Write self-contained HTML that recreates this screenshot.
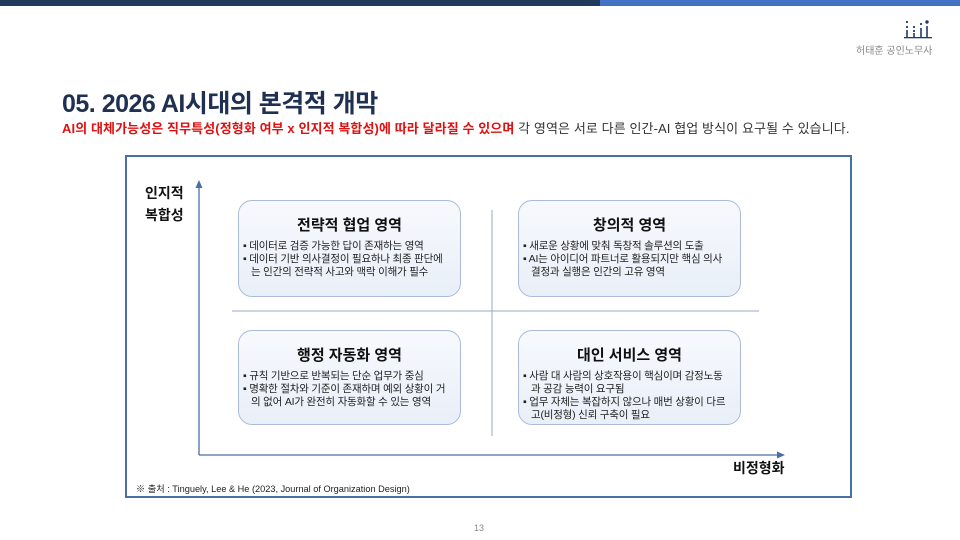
<!DOCTYPE html>
<html><head><meta charset="utf-8"><style>
*{margin:0;padding:0;box-sizing:border-box}
body{width:960px;height:540px;background:#fff;position:relative;overflow:hidden;font-family:"Liberation Sans","Noto Sans CJK KR",sans-serif;color:#222}
.a{position:absolute}
.box{position:absolute;width:223px;border:1px solid #a9bbd8;border-radius:14px;background:linear-gradient(#f7f9fd,#e9eff8);padding:0 4px}
.box h3{font-size:15px;font-weight:bold;text-align:center;margin-top:13px;margin-bottom:5px;color:#111}
.box p{font-size:10.5px;line-height:13px;padding-left:8px;text-indent:-8px;color:#222;letter-spacing:-0.2px;white-space:nowrap}
</style></head><body>
<div class="a" style="left:0;top:0;width:600px;height:6px;background:#213a5c"></div>
<div class="a" style="left:600px;top:0;width:360px;height:6px;background:#4472c4"></div>
<svg class="a" style="left:904px;top:18px" width="30" height="22" viewBox="0 0 30 22">
<g fill="#1f3a6a"><circle cx="3" cy="4" r="1.1"/><circle cx="3" cy="9" r="1.1"/><rect x="2.2" y="12" width="1.6" height="7"/>
<circle cx="10" cy="9" r="1.1"/><circle cx="10" cy="13" r="1.1"/><rect x="9.2" y="15" width="1.6" height="4"/>
<circle cx="17" cy="6" r="1.1"/><rect x="16.2" y="10" width="1.6" height="9"/>
<circle cx="23" cy="4" r="1.7"/><rect x="22.2" y="8" width="1.6" height="11"/>
<rect x="0" y="19" width="28" height="1.3"/></g></svg>
<div class="a" style="left:856px;top:42px;font-size:10px;color:#888">허태훈 공인노무사</div>
<div class="a" style="left:62px;top:84px;font-size:25px;font-weight:bold;color:#1f3050;letter-spacing:-0.5px">05. 2026 AI시대의 본격적 개막</div>
<div class="a" style="left:62px;top:118px;font-size:13px;color:#333;white-space:nowrap;letter-spacing:0.1px"><b style="color:#e01010">AI의 대체가능성은 직무특성(정형화 여부 x 인지적 복합성)에 따라 달라질 수 있으며</b> 각 영역은 서로 다른 인간-AI 협업 방식이 요구될 수 있습니다.</div>
<div class="a" style="left:125px;top:155px;width:727px;height:343px;border:2px solid #4a6fa5"></div>
<svg class="a" style="left:0;top:0" width="960" height="540">
<line x1="199" y1="455" x2="199" y2="186" stroke="#4a6fa5" stroke-width="1.3"/>
<polygon points="199,180 195.5,188 202.5,188" fill="#4a6fa5"/>
<line x1="199" y1="455" x2="779" y2="455" stroke="#4a6fa5" stroke-width="1.3"/>
<polygon points="785,455 777,451.5 777,458.5" fill="#4a6fa5"/>
<line x1="492" y1="210" x2="492" y2="436" stroke="#9aaac4" stroke-width="1"/>
<line x1="232" y1="311" x2="759" y2="311" stroke="#9aaac4" stroke-width="1"/>
</svg>
<div class="a" style="left:145px;top:182px;font-size:14px;font-weight:bold;line-height:22px;color:#111">인지적<br>복합성</div>
<div class="a" style="left:733px;top:458px;font-size:14px;font-weight:bold;color:#111">비정형화</div>
<div class="box" style="left:238px;top:200px;height:97px"><h3>전략적 협업 영역</h3>
<p>▪ 데이터로 검증 가능한 답이 존재하는 영역</p><p>▪ 데이터 기반 의사결정이 필요하나 최종 판단에<br>는 인간의 전략적 사고와 맥락 이해가 필수</p></div>
<div class="box" style="left:518px;top:200px;height:97px"><h3>창의적 영역</h3>
<p>▪ 새로운 상황에 맞춰 독창적 솔루션의 도출</p><p>▪ AI는 아이디어 파트너로 활용되지만 핵심 의사<br>결정과 실행은 인간의 고유 영역</p></div>
<div class="box" style="left:238px;top:330px;height:95px"><h3>행정 자동화 영역</h3>
<p>▪ 규칙 기반으로 반복되는 단순 업무가 중심</p><p>▪ 명확한 절차와 기준이 존재하며 예외 상황이 거<br>의 없어 AI가 완전히 자동화할 수 있는 영역</p></div>
<div class="box" style="left:518px;top:330px;height:95px"><h3>대인 서비스 영역</h3>
<p>▪ 사람 대 사람의 상호작용이 핵심이며 감정노동<br>과 공감 능력이 요구됨</p><p>▪ 업무 자체는 복잡하지 않으나 매번 상황이 다르<br>고(비정형) 신뢰 구축이 필요</p></div>
<div class="a" style="left:136px;top:481px;font-size:9.2px;color:#222">※ 출처 : Tinguely, Lee &amp; He (2023, Journal of Organization Design)</div>
<div class="a" style="left:474px;top:523px;font-size:9px;color:#888">13</div>
</body></html>
